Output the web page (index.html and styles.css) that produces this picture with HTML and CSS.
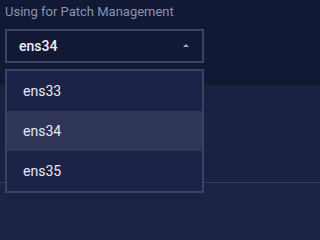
FILE: index.html
```html
<!DOCTYPE html>
<html>
<head>
<meta charset="utf-8">
<link rel="stylesheet" href="styles.css">
</head>
<body>
<div class="page">
  <div class="top-panel">
    <div class="label">Using for Patch Management</div>
    <div class="select">
      <span class="value">ens34</span>
      <span class="caret"></span>
    </div>
  </div>
  <div class="lower-panel"></div>
  <div class="bottom-panel"></div>
  <ul class="menu">
    <li class="item">ens33</li>
    <li class="item active">ens34</li>
    <li class="item">ens35</li>
  </ul>
</div>
</body>
</html>
```
FILE: styles.css
```css
html, body {
  margin: 0;
  padding: 0;
  background: #1b2244;
  font-family: Roboto, "Liberation Sans", sans-serif;
}
.page {
  position: relative;
  width: 100%;
  min-height: 205px;
}
.top-panel {
  height: 85px;
  background: #121934;
  padding: 4px 0 0 5px;
  box-sizing: border-box;
}
.label {
  font-size: 13px;
  line-height: 16px;
  color: #8a93b1;
}
.select {
  margin-top: 9px;
  width: 199px;
  height: 34px;
  box-sizing: border-box;
  border: 2px solid #3a4364;
  display: flex;
  align-items: center;
  justify-content: space-between;
  padding: 0 13px 0 12px;
}
.value {
  font-size: 14px;
  font-weight: 500;
  color: #eef0f6;
}
.caret {
  width: 0;
  height: 0;
  border-left: 3px solid transparent;
  border-right: 3px solid transparent;
  border-bottom: 3px solid #a4acca;
  margin-top: -1px;
}
.lower-panel {
  height: 97px;
  background: #1a2143;
  border-bottom: 1px solid #353e60;
}
.bottom-panel {
  height: 22px;
  background: #1b2244;
}
.menu {
  position: absolute;
  top: 69px;
  left: 5px;
  width: 199px;
  margin: 0;
  padding: 0;
  list-style: none;
  background: #1c2348;
  border: 2px solid #3a4364;
  box-sizing: border-box;
}
.item {
  height: 40px;
  display: flex;
  align-items: center;
  padding-left: 16px;
  font-size: 14px;
  color: #e8eaf2;
}
.item.active {
  background: #2f3557;
}
```
